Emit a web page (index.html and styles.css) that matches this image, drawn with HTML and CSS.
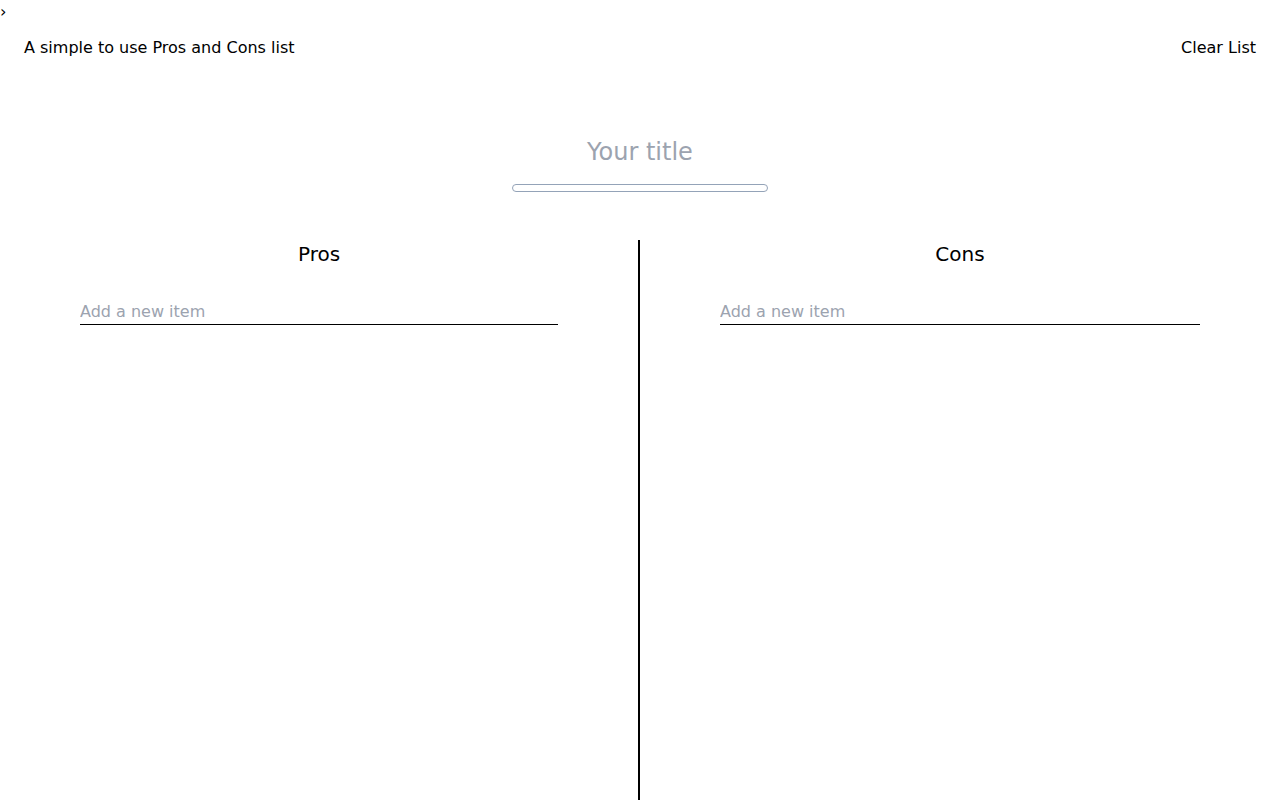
FILE: index.html
```html
<!DOCTYPE html>
<html lang="en">
<head>
<meta charset="utf-8">
<title>Pros and Cons</title>
<link rel="stylesheet" href="styles.css">
</head>
<body>
<div class="toggle">›</div>
<header class="topbar">
  <span class="tagline">A simple to use Pros and Cons list</span>
  <button class="clear">Clear List</button>
</header>
<section class="title-area">
  <input class="title-input" type="text" placeholder="Your title">
  <div class="title-bar"></div>
</section>
<main class="columns">
  <section class="col col-pros">
    <h2 class="col-title">Pros</h2>
    <input class="item-input" type="text" placeholder="Add a new item">
  </section>
  <section class="col col-cons">
    <h2 class="col-title">Cons</h2>
    <input class="item-input" type="text" placeholder="Add a new item">
  </section>
</main>
</body>
</html>
```
FILE: styles.css
```css
* { box-sizing: border-box; }
html, body { margin: 0; padding: 0; height: 100%; }
body {
  font-family: "DejaVu Sans", sans-serif;
  font-size: 16px;
  color: #000;
  background: #fff;
  display: flex;
  flex-direction: column;
  overflow: hidden;
}
.toggle {
  font-size: 16px;
  line-height: 19px;
  padding-top: 2px;
}
.topbar {
  display: flex;
  justify-content: space-between;
  align-items: center;
  padding: 17px 24px 18px;
  line-height: 19px;
}
.clear {
  font: inherit;
  background: none;
  border: none;
  padding: 0;
  color: #000;
}
.title-area {
  display: flex;
  flex-direction: column;
  align-items: center;
  padding-top: 63px;
}
.title-input {
  font-family: "DejaVu Sans", sans-serif;
  font-size: 24px;
  line-height: 28px;
  height: 28px;
  width: 400px;
  text-align: center;
  border: none;
  outline: none;
  padding: 0;
  color: #000;
}
.title-input::placeholder { color: #9ca3af; }
.title-bar {
  margin-top: 18px;
  width: 256px;
  height: 8px;
  border: 1px solid #94a3b8;
  border-radius: 4px;
}
.columns {
  flex: 1;
  display: grid;
  grid-template-columns: 1fr 1fr;
  margin-top: 48px;
}
.col {
  padding: 0 80px;
  display: flex;
  flex-direction: column;
}
.col-pros { border-right: 2px solid #000; }
.col-title {
  margin: 0;
  font-size: 20px;
  font-weight: normal;
  line-height: 28px;
  text-align: center;
}
.item-input {
  margin-top: 30px;
  font-family: "DejaVu Sans", sans-serif;
  font-size: 16px;
  height: 27px;
  padding: 0;
  border: none;
  border-bottom: 1px solid #000;
  outline: none;
  width: 100%;
}
.item-input::placeholder { color: #9ca3af; }
```
